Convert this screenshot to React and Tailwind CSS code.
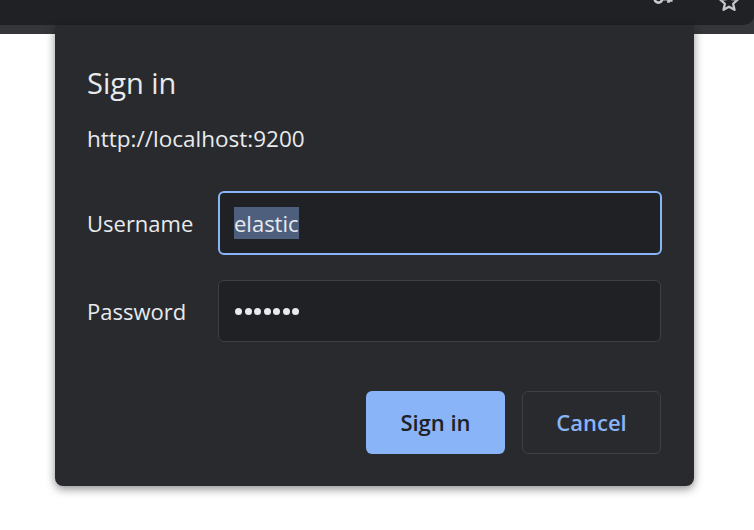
export default function App() {
  const font = { fontFamily: '"Segoe UI", "Open Sans", "Noto Sans", sans-serif' };

  return (
    <div className="relative w-[754px] h-[530px] bg-white overflow-hidden" style={font}>
      {/* browser toolbar strip */}
      <div className="h-[34px] bg-[#35363a]">
        <div className="relative h-[25px] bg-[#202124] rounded-br-[10px] overflow-hidden">
          <svg
            className="absolute left-[652px] top-[-12px]"
            width="22"
            height="22"
            viewBox="0 0 24 24"
            fill="none"
            stroke="#c6c8cc"
            strokeWidth="3"
          >
            <circle cx="7" cy="12" r="4" />
            <path d="M11 12h10M18 12v4M21 12v3" />
          </svg>
          <svg
            className="absolute left-[718px] top-[-9px]"
            width="22"
            height="22"
            viewBox="0 0 24 24"
            fill="none"
            stroke="#c6c8cc"
            strokeWidth="2.5"
            strokeLinejoin="round"
          >
            <path d="M12 2.5l2.9 6.3 6.6.6-5 4.5 1.5 6.6L12 17.1l-6 3.4 1.5-6.6-5-4.5 6.6-.6z" />
          </svg>
        </div>
      </div>

      {/* auth dialog */}
      <div className="absolute left-[55px] top-[25px] w-[639px] h-[461px] bg-[#292a2d] rounded-b-[8px] shadow-[0_3px_10px_rgba(0,0,0,0.45)] px-[32px] pt-[40px]">
        <h1 className="text-[29px] leading-[36px] text-[#e8eaed] font-normal">Sign in</h1>
        <p className="mt-[23px] text-[22.5px] leading-[30px] text-[#e8eaed]">http://localhost:9200</p>

        <div className="mt-[37px] flex items-center">
          <label className="w-[131px] text-[22px] text-[#e8eaed]">Username</label>
          <div className="w-[444px] h-[64px] rounded-[6px] border-2 border-[#8ab4f8] bg-[#202124] flex items-center px-[14px]">
            <span className="text-[22px] leading-[32px] text-[#e8eaed] bg-[#4e5f7d]">elastic</span>
          </div>
        </div>

        <div className="mt-[25px] flex items-center">
          <label className="w-[131px] text-[22px] text-[#e8eaed]">Password</label>
          <div className="w-[443px] h-[62px] rounded-[6px] border border-[#3c4043] bg-[#202124] flex items-center px-[16px] gap-[2.5px]">
            {[0, 1, 2, 3, 4, 5, 6].map((i) => (
              <span key={i} className="w-[7px] h-[7px] rounded-full bg-[#e8eaed]" />
            ))}
          </div>
        </div>

        <div className="mt-[49px] flex justify-end gap-[17px] pr-[1px]">
          <button className="w-[139px] h-[63px] rounded-[6px] bg-[#8ab4f8] text-[#202124] text-[22px] font-semibold">
            Sign in
          </button>
          <button className="w-[139px] h-[63px] rounded-[6px] border border-[#3c4043] bg-transparent text-[#8ab4f8] text-[22px] font-semibold">
            Cancel
          </button>
        </div>
      </div>
    </div>
  );
}
